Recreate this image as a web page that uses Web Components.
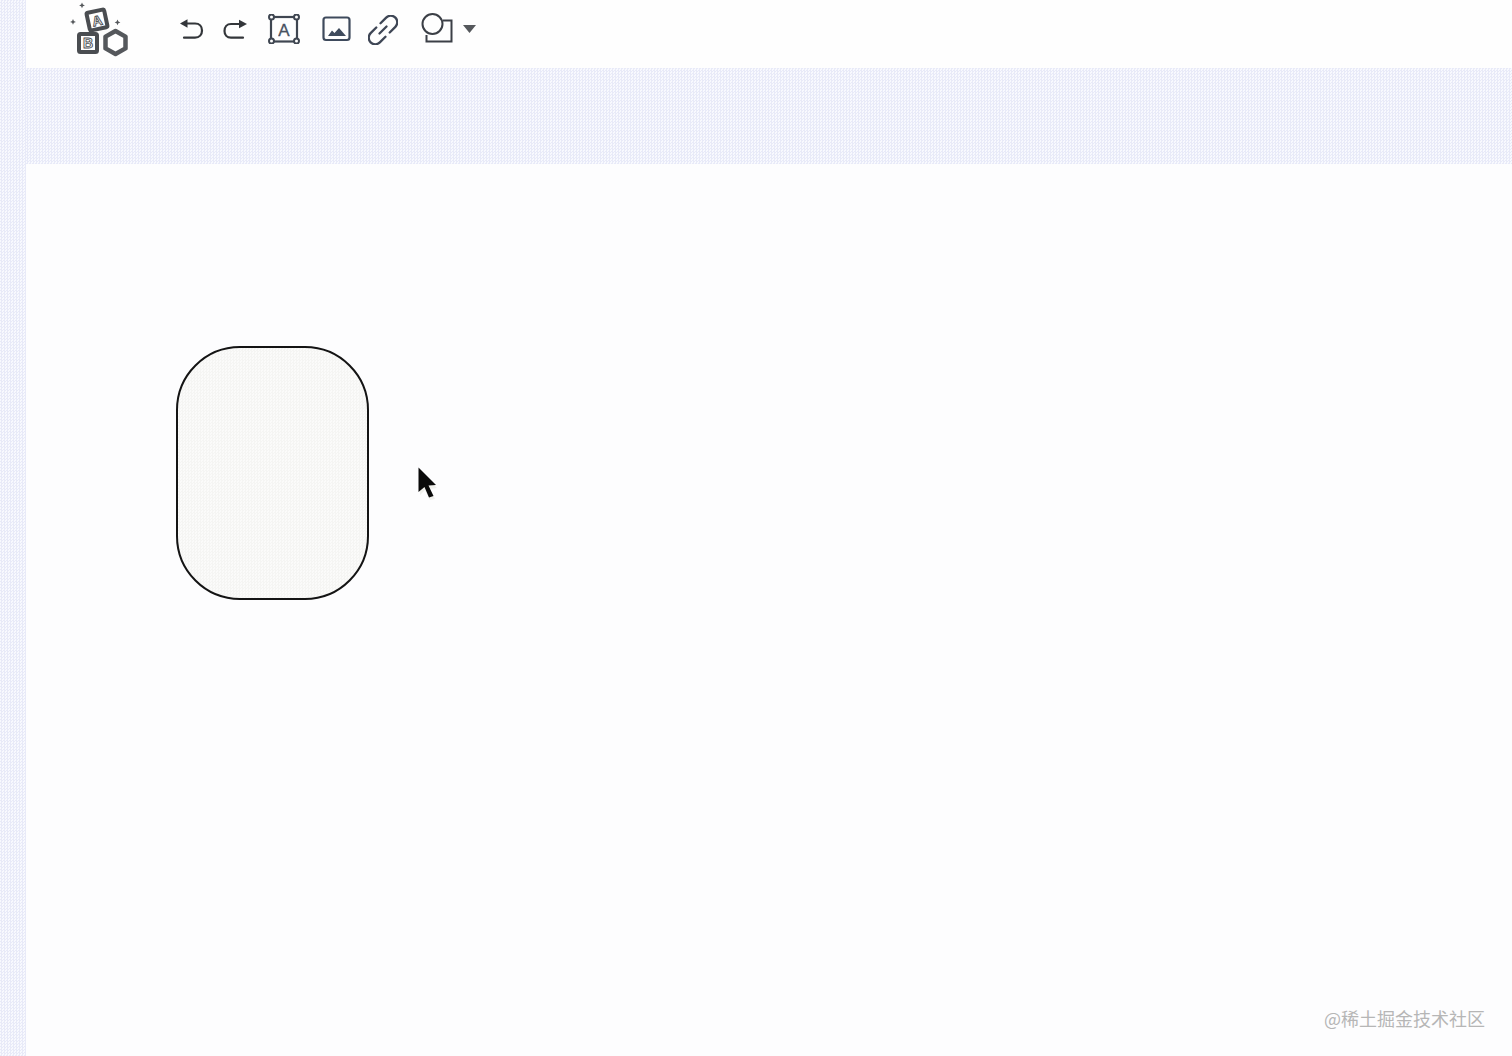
<!DOCTYPE html>
<html lang="zh">
<head>
<meta charset="utf-8">
<title>canvas editor</title>
<style>
html, body { margin: 0; height: 100%; }
body { background: #fdfdfe; overflow: hidden; }
</style>
</head>
<body>
<editor-app>
  <editor-toolbar></editor-toolbar>
  <editor-canvas>
    <canvas-shape></canvas-shape>
    <mouse-pointer></mouse-pointer>
    <water-mark>@稀土掘金技术社区</water-mark>
  </editor-canvas>
</editor-app>

<script>
// the weave used by the rail and the band
const DITHER = "repeating-conic-gradient(#e8eaf8 0 25%, #f8f9fe 0 50%) 0 0 / 3px 3px";

// MAIN SHELL - rail on the left, everything else on the right
class EditorApp extends HTMLElement {
  constructor() {
    super();
    this.attachShadow({ mode: "open" }).innerHTML = `
<style>
:host { display: grid; grid-template-columns: 26px 1fr; width: 1512px; height: 1056px; font-family: "Liberation Sans", sans-serif; }
.rail { background: ${DITHER}; }
.main { display: flex; flex-direction: column; min-width: 0; }
.band { height: 96px; background: ${DITHER}; flex: none; }
.top { flex: none; height: 68px; }
.rest { flex: 1; min-height: 0; display: flex; }
</style>
<div class="rail"></div>
<div class="main">
  <div class="top"><slot name="top"></slot></div>
  <div class="band"></div>
  <div class="rest"><slot></slot></div>
</div>`;
  }
  connectedCallback() {
    const bar = this.querySelector("editor-toolbar");
    if (bar) bar.slot = "top";
  }
}

// TOOLBAR - svg viewBoxes use page coordinates so the strokes are easy to check
class EditorToolbar extends HTMLElement {
  constructor() {
    super();
    this.attachShadow({ mode: "open" }).innerHTML = `
<style>
:host { display: flex; align-items: flex-start; height: 68px; background: #fefefe; padding-left: 44px; box-sizing: border-box; }
svg { display: block; flex: none; }
.ln { fill: none; stroke-linecap: round; stroke-linejoin: round; }
text { font-family: "Liberation Sans", sans-serif; opacity: .99; }
</style>
<svg style="margin-right:48px" width="60" height="60" viewBox="70 0 60 60">
  <g fill="#55585c">
    <path d="M82 2.5l.9 2 2 .9-2 .9-.9 2-.9-2-2-.9 2-.9z"/>
    <path d="M73 19l.9 2 2 .9-2 .9-.9 2-.9-2-2-.9 2-.9z"/>
    <path d="M117.500 19.500l.9 2 2 .9-2 .9-.9 2-.9-2-2-.9 2-.9z"/>
  </g>
  <g transform="rotate(-12 97 20)">
    <rect x="88" y="11" width="18" height="18" rx="1.500" fill="#fff" stroke="#4a4d51" stroke-width="4"/>
    <text x="97" y="25.500" font-size="14" font-weight="700" text-anchor="middle" fill="#fff" stroke="#4a4d51" stroke-width=".9">A</text>
  </g>
  <rect x="79" y="34" width="18" height="18" rx="1.500" fill="#fff" stroke="#4a4d51" stroke-width="4"/>
  <text x="88" y="48" font-size="14" font-weight="700" text-anchor="middle" fill="#fff" stroke="#4a4d51" stroke-width=".9">B</text>
  <path d="M115.500 31l10 5.600v11.800l-10 5.600-10-5.600V36.600z" fill="#fff" stroke="#55585c" stroke-width="4.500" stroke-linejoin="round"/>
</svg>
<svg style="margin-top:14px;margin-right:16px" width="28" height="30" viewBox="178 14 28 30">
  <path d="M180 23.500l7.500-4.200v8.400z" fill="#33363a"/>
  <path class="ln" stroke="#33363a" stroke-width="2.200" d="M186 23.500H195C199.500 23.500 202 26.500 202 30.500S199.500 37.700 195 37.700H184"/>
</svg>
<svg style="margin-top:14px;margin-right:18px" width="28" height="30" viewBox="222 14 28 30">
  <path d="M247 24l-8-4.200v8.400z" fill="#33363a"/>
  <path class="ln" stroke="#33363a" stroke-width="2.200" d="M240 24H231C227 24 224.500 27 224.500 31S227 37.700 231 37.700H243"/>
</svg>
<svg style="margin-top:14px;margin-right:21px" width="32" height="30" viewBox="268 14 32 30">
  <rect x="271" y="17" width="26" height="24.500" fill="none" stroke="#3f4651" stroke-width="2.200"/>
  <g fill="#fff" stroke="#3f4651" stroke-width="2">
    <circle cx="271.500" cy="17" r="2.500"/><circle cx="296.500" cy="17" r="2.500"/>
    <circle cx="271.500" cy="41" r="2.500"/><circle cx="296.500" cy="41" r="2.500"/>
  </g>
  <text x="284" y="36" font-size="17" text-anchor="middle" fill="#46505e" stroke="#46505e" stroke-width=".3">A</text>
</svg>
<svg style="margin-top:14px;margin-right:15px" width="32" height="30" viewBox="321 14 32 30">
  <rect x="323.500" y="17.500" width="26" height="22.500" rx="2.500" fill="none" stroke="#3e4a5c" stroke-width="2.200"/>
  <path d="M328 36l4-5.500 2.500 2.500 4.500-5 7 8z" fill="#3e4a5c"/>
</svg>
<svg style="margin-top:15px;margin-right:23px" width="30" height="30" viewBox="368 15 30 30">
  <g transform="translate(383 30) rotate(-45)" class="ln" stroke="#3e4655" stroke-width="2.300">
    <path d="M-3-6.500H-11A6.500 6.500 0 0 0-11 6.500H-3"/>
    <path d="M3-6.500H11A6.500 6.500 0 0 1 11 6.500H3"/>
    <path d="M-5 0H5"/>
  </g>
</svg>
<svg style="margin-top:10px" width="56" height="36" viewBox="421 10 56 36">
  <circle cx="432.500" cy="24" r="10" fill="none" stroke="#3b3f46" stroke-width="2"/>
  <path fill="none" stroke="#3b3f46" stroke-width="2" d="M443 20.500H451.500V41.500H426.500V35"/>
  <path d="M463 25h13l-6.500 8z" fill="#55585c"/>
</svg>`;
  }
}

// CANVAS - free area, holds the shape, the pointer and the watermark
class EditorCanvas extends HTMLElement {
  constructor() {
    super();
    this.attachShadow({ mode: "open" }).innerHTML = `
<style>
:host { display: block; position: relative; flex: 1; background: #fdfdfe; }
</style>
<slot></slot>`;
  }
}

class CanvasShape extends HTMLElement {
  constructor() {
    super();
    this.attachShadow({ mode: "open" }).innerHTML = `
<style>
:host {
  display: block; position: absolute; left: 150px; top: 182px;
  width: 193px; height: 254px; box-sizing: border-box;
  border: 2px solid #141414; border-radius: 64px;
  background: repeating-conic-gradient(#f5f5f3 0 25%, #fbfbfa 0 50%) 0 0 / 3px 3px;
}
</style>`;
  }
}

class MousePointer extends HTMLElement {
  constructor() {
    super();
    this.attachShadow({ mode: "open" }).innerHTML = `
<style>
:host { display: block; position: absolute; left: 390px; top: 300px; width: 24px; height: 36px; }
svg { display: block; }
</style>
<svg width="24" height="36" viewBox="416 464 24 36">
  <path d="M420 471l17 17-7 1 5 10-5 1-5-10-5 5z" fill="#e9e9e4" opacity=".7"/>
  <path d="M418.500 467.500L436 485l-7.500.5 5 10.500-4.500 1.500-4.500-10.500-6 5z" fill="#0a0a0a"/>
</svg>`;
  }
}

class WaterMark extends HTMLElement {
  constructor() {
    super();
    this.attachShadow({ mode: "open" }).innerHTML = `
<style>
:host {
  display: block; position: absolute; right: 27px; bottom: 25px;
  font: 18px/26px "Noto Sans CJK SC", "Liberation Sans", sans-serif;
  color: #b6b6b6; white-space: nowrap;
}
</style>
<slot></slot>`;
  }
}

customElements.define("editor-app", EditorApp);
customElements.define("editor-toolbar", EditorToolbar);
customElements.define("editor-canvas", EditorCanvas);
customElements.define("canvas-shape", CanvasShape);
customElements.define("mouse-pointer", MousePointer);
customElements.define("water-mark", WaterMark);
</script>
</body>
</html>
